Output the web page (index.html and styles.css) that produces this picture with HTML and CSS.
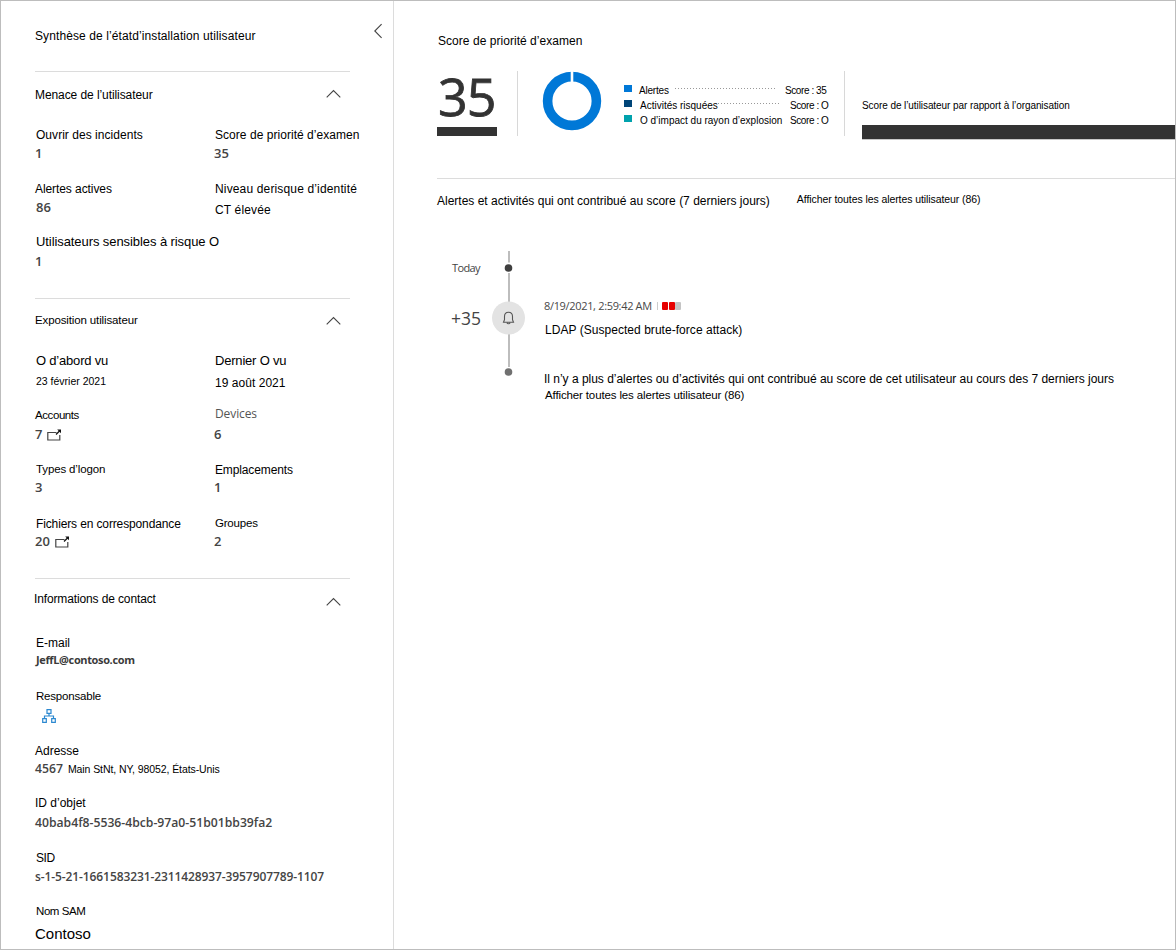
FILE: index.html
```
<!DOCTYPE html>
<html lang="fr">
<head>
<meta charset="utf-8">
<title>Synthèse utilisateur</title>
<link rel="stylesheet" href="styles.css">
</head>
<body>
<svg class="defs" aria-hidden="true">
  <symbol id="chevron" viewBox="0 0 16 10"><path d="M1.7 8.4 8.5 1.6l6.8 6.8" fill="none" stroke="#444" stroke-width="1.1"/></symbol>
  <symbol id="popout" viewBox="0 0 15 12"><path d="M9.500 3.500H.8v7.500h12V6" fill="none" stroke="#444" stroke-width="1.2"/><path d="M9 5.500 13 1.500" fill="none" stroke="#111" stroke-width="1.3"/><path d="M10.200.5H14v3.800z" fill="#111"/></symbol>
</svg>
<div class="page">
  <aside class="side">
    <header class="side-head">
      <h1 class="text t12 wide">Synthèse de l’étatd’installation utilisateur</h1>
      <svg class="back" viewBox="0 0 10 16"><path d="M8.6 1.2 1.8 8l6.8 6.8" fill="none" stroke="#444" stroke-width="1.1"/></svg>
    </header>

    <section class="section threat">
      <div class="section-head"><h2 class="text t12 snug">Menace de l’utilisateur</h2><svg class="chev"><use href="#chevron"/></svg></div>
      <div class="fields">
        <div class="field"><p class="text t12 in roomy">Ouvrir des incidents</p><p class="value">1</p></div>
        <div class="field"><p class="text t12 in roomy">Score de priorité d’examen</p><p class="value">35</p></div>
        <div class="field"><p class="text t12 snug">Alertes actives</p><p class="value in">86</p></div>
        <div class="field"><p class="text t12 wider in">Niveau derisque d’identité</p><p class="text t12 wider low in">CT élevée</p></div>
        <div class="field full"><p class="text t13 in snug">Utilisateurs sensibles à risque O</p><p class="value">1</p></div>
      </div>
    </section>

    <section class="section exposure">
      <div class="section-head"><h2 class="text t115 narrow">Exposition utilisateur</h2><svg class="chev"><use href="#chevron"/></svg></div>
      <div class="fields">
        <div class="field"><p class="text t13 tight in">O d’abord vu</p><p class="text t105 in first-date">23 février 2021</p></div>
        <div class="field"><p class="text t13 tight in">Dernier O vu</p><p class="text t12 last-date in roomy">19 août 2021</p></div>
        <div class="field"><p class="text t115 tighter drop">Accounts</p><p class="value link">7<svg class="pop"><use href="#popout"/></svg></p></div>
        <div class="field"><p class="soft in">Devices</p><p class="value">6</p></div>
        <div class="field"><p class="text t115 in narrow">Types d’logon</p><p class="value">3</p></div>
        <div class="field"><p class="text t12 narrow in drop">Emplacements</p><p class="value">1</p></div>
        <div class="field"><p class="text t12 in narrow drop">Fichiers en correspondance</p><p class="value link">20<svg class="pop"><use href="#popout"/></svg></p></div>
        <div class="field"><p class="text t115 tight in">Groupes</p><p class="value">2</p></div>
      </div>
    </section>

    <section class="section contact">
      <div class="section-head"><h2 class="text t12 narrow">Informations de contact</h2><svg class="chev"><use href="#chevron"/></svg></div>
      <div class="item mail"><p class="text t12 in">E-mail</p><p class="value v11">JeffL@contoso.com</p></div>
      <div class="item manager"><p class="text t115 in tight">Responsable</p>
        <svg class="org" viewBox="0 0 14 14"><g fill="none" stroke="#2b88d0" stroke-width="1.2"><path d="M5 .7h4v3.6H5zM.7 9.7h3.6v3.6H.7zM9.7 9.7h3.6v3.6H9.7zM7 4.3V7M2.5 9.7V7h9v2.7"/></g></svg></div>
      <div class="item address"><p class="text t12">Adresse</p><p class="value v12 street">4567 <span class="text t105 snug">Main StNt, NY, 98052, États-Unis</span></p></div>
      <div class="item object"><p class="text t12">ID d’objet</p><p class="value v12 guid">40bab4f8-5536-4bcb-97a0-51b01bb39fa2</p></div>
      <div class="item sid"><p class="text t12 tighter in">SID</p><p class="value v12 sid-value">s-1-5-21-1661583231-2311428937-3957907789-1107</p></div>
      <div class="item sam"><p class="text t115 tighter in">Nom SAM</p><p class="text t15">Contoso</p></div>
    </section>
  </aside>

  <main class="main">
    <h2 class="text t12 score-title roomy">Score de priorité d’examen</h2>
    <div class="summary">
      <div class="score"><span class="score-num">35</span></div>
      <svg class="donut" viewBox="0 0 60 60"><circle cx="30" cy="30" r="24.4" fill="none" stroke="#0078d7" stroke-width="9.6"/><path d="M30 0v12" stroke="#fff" stroke-width="2.6"/></svg>
      <ul class="legend">
        <li><i class="sw alert"></i><span class="text t10 tight name">Alertes</span><i class="dots"></i><span class="text t10 tighter pts">Score : 35</span></li>
        <li><i class="sw risk"></i><span class="text t10 name in">Activités risquées</span><i class="dots near"></i><span class="text t10 tighter pts shift">Score : O</span></li>
        <li><i class="sw blast"></i><span class="text t10 name in">O d’impact du rayon d’explosion</span><i class="dots none"></i><span class="text t10 tighter pts shift">Score : O</span></li>
      </ul>
      <div class="org-score"><p class="text t10 snug">Score de l’utilisateur par rapport à l’organisation</p><div class="org-bar"></div></div>
    </div>
    <div class="alerts-head">
      <h2 class="text t12">Alertes et activités qui ont contribué au score (7 derniers jours)</h2>
      <a class="text t105 snug all">Afficher toutes les alertes utilisateur (86)</a>
    </div>
    <div class="timeline">
      <div class="when"><p class="today">Today</p><p class="plus">+35</p></div>
      <svg class="rail" viewBox="0 0 34 130">
        <path d="M17 0v11.500M17 22v94" stroke="#bdbdbd" stroke-width="2"/>
        <circle cx="16.500" cy="17" r="3.800" fill="#3f3f3f"/>
        <circle cx="16.500" cy="67" r="16.500" fill="#e3e3e3"/>
        <path d="M16.500 61.200c-2.500 0-4 1.900-4 4.300v3.200l-1 2.600h10l-1-2.600v-3.200c0-2.400-1.500-4.300-4-4.300zM15 71.800c.3 1.300 2.700 1.300 3 0" fill="none" stroke="#555" stroke-width="1.100"/>
        <circle cx="16.500" cy="121" r="3.800" fill="#707070"/>
      </svg>
      <div class="events">
        <div class="stamp"><span>8/19/2021, 2:59:42 AM</span><i class="sep"></i><i class="sev on"></i><i class="sev on"></i><i class="sev"></i></div>
        <p class="text t12 alert-name roomy">LDAP (Suspected brute-force attack)</p>
        <p class="text t12 no-more">Il n’y a plus d’alertes ou d’activités qui ont contribué au score de cet utilisateur au cours des 7 derniers jours</p>
        <a class="text t115 narrow more">Afficher toutes les alertes utilisateur (86)</a>
      </div>
    </div>
  </main>
</div>
</body>
</html>
```
FILE: styles.css
```
* { box-sizing: border-box; margin: 0; padding: 0; }
body { background: #fff; font-family: "Liberation Sans", Arial, sans-serif; color: #000; }
.defs { display: block; width: 0; height: 0; }
.page { display: flex; width: 1176px; height: 950px; border: 1px solid #bdbdbd; overflow: hidden; }

.text { display: block; font-family: "Liberation Sans", Arial, sans-serif; font-weight: 400; line-height: 16px; height: 16px; color: #000; white-space: nowrap; }
.t10 { font-size: 10px; }
.t105 { font-size: 10.5px; }
.t115 { font-size: 11.5px; }
.t12 { font-size: 12px; }
.t13 { font-size: 13px; }
.t15 { font-size: 15px; }
.wider { letter-spacing: .15px; }
.wide { letter-spacing: .1px; }
.roomy { letter-spacing: .04px; }
.snug { letter-spacing: -.08px; }
.narrow { letter-spacing: -.13px; }
.tight { letter-spacing: -.2px; }
.tighter { letter-spacing: -.42px; }
.in { padding-left: 1px; }

.side { width: 393px; flex: none; border-right: 1px solid #dcdcdc; padding: 27px 10px 0 34px; }
.side-head { display: flex; justify-content: space-between; height: 43px; }
.back { width: 10px; height: 16px; margin-top: -5px; }
.section { width: 315px; border-top: 1px solid #dcdcdc; }
.section-head { display: flex; justify-content: space-between; padding-right: 9px; height: 40px; }
.chev { width: 16px; height: 10px; flex: none; }
.fields { display: grid; grid-template-columns: 179px 1fr; grid-auto-rows: 54px; }
.full { grid-column: 1 / -1; }
.value, .soft { font-family: "Open Sans", "Noto Sans", sans-serif; font-size: 13px; line-height: 16px; height: 16px; font-weight: 600; color: #444; white-space: nowrap; }
.value { margin-top: 2px; }
.soft { font-size: 12px; font-weight: 400; color: #555; letter-spacing: -.1px; }

.threat { height: 227px; padding-top: 15px; }
.threat .chev { margin-top: 2px; }
.threat .low { margin-top: 5px; }
.threat .full { margin-top: -1px; }
.threat .full .value { margin-top: 3px; }

.exposure { height: 280px; padding-top: 13px; }
.exposure .chev { margin-top: 4px; }
.exposure .fields { grid-template-rows: 53px 55px 54px 54px; padding-top: 1px; }
.first-date { margin-top: 4px; }
.last-date { margin-top: 6px; }
.exposure .field:nth-child(3) .value,
.exposure .field:nth-child(4) .value { margin-top: 4px; }
.exposure .drop { height: 17px; padding-top: 1px; margin-bottom: -1px; }
.link { display: flex; }
.pop { width: 15px; height: 12px; margin: 3px 0 0 5px; }

.contact { padding-top: 12px; }
.contact .section-head { height: 44px; margin-left: -1px; }
.contact .chev { margin-top: 6px; }
.item { height: 54px; }
.mail { height: 53px; }
.mail .value { margin-top: 1px; }
.v11 { font-size: 11px; font-weight: 700; letter-spacing: -.36px; color: #3a3a3a; padding-left: 1px; }
.v12 { font-size: 12.2px; }
.manager { height: 55px; }
.org { display: block; width: 14px; height: 14px; margin: 5px 0 0 7px; }
.address { height: 52px; }
.street { display: flex; gap: 5px; }
.object { height: 55px; }
.object .value { margin-top: 4px; }
.guid { letter-spacing: 0; }
.sid { height: 53px; }
.sid .value { margin-top: 3px; }
.sid-value { font-size: 12px; letter-spacing: -.1px; }
.sam .t15 { margin-top: 7px; }

.main { flex: 1; min-width: 0; padding: 32px 0 0 43px; }
.score-title { padding-left: 1px; }
.summary { display: flex; height: 65px; margin-top: 22px; }
.score { width: 81px; padding-right: 20px; border-right: 1px solid #d8d8d8; flex: none; }
.score-num { display: block; height: 65px; border-bottom: 9px solid #333; font: 500 52px/50px "Open Sans", "Noto Sans", sans-serif; color: #333; letter-spacing: -1px; padding-left: 1px; -webkit-text-stroke: .8px #333; }
.donut { width: 60px; height: 60px; margin: 0 0 0 24px; flex: none; }
.legend { list-style: none; width: 243px; padding: 12px 16px 0 22px; border-right: 1px solid #d8d8d8; flex: none; }
.legend li { display: flex; height: 15px; }
.sw { width: 8px; height: 7px; margin: 2px 7px 0 0; flex: none; }
.alert { background: #0078d7; }
.risk { background: #004578; }
.blast { background: #00a2ad; }
.dots { flex: 1; height: 1px; margin: 5px 9px 0 6px; background: repeating-linear-gradient(90deg, #999 0 1px, transparent 1px 3px); }
.near { margin-left: 0; margin-right: 10px; }
.none { background: none; margin: 0; }
.pts { width: 43px; flex: none; }
.shift { width: 38px; }
.org-score { flex: 1; padding: 27px 0 0 17px; }
.org-bar { height: 15px; margin-top: 11px; background: #333; border: solid #c8c8c8; border-width: 0 0 1px; }
.alerts-head { display: flex; margin-top: 42px; border-top: 1px solid #dcdcdc; padding-top: 14px; height: 73px; }
.all { margin: -2px 0 0 27px; }
.timeline { display: flex; }
.when { width: 55px; padding-left: 15px; font-family: "Open Sans", "Noto Sans", sans-serif; color: #444; flex: none; }
.today { font-size: 11px; line-height: 16px; margin-top: 9px; letter-spacing: -.6px; }
.plus { font-size: 17.5px; line-height: 24px; margin: 30px 0 0 -1px; }
.rail { width: 34px; height: 130px; flex: none; }
.events { padding: 47px 0 0 18px; }
.stamp { display: flex; height: 16px; font: 11px/16px "Open Sans", "Noto Sans", sans-serif; color: #484848; }
.stamp span { letter-spacing: -.33px; width: 113px; white-space: nowrap; }
.sep { width: 1px; height: 8px; background: #ccc; margin: 4px 4px 0 0; }
.sev { width: 6px; height: 8px; border-radius: 1px; background: #c4c4c4; margin: 4px .5px 0 0; }
.on { background: #e60000; }
.alert-name { margin-top: 8px; padding-left: 1px; }
.no-more { margin-top: 33px; letter-spacing: -.015px; }
.more { padding-left: 1px; }
```
